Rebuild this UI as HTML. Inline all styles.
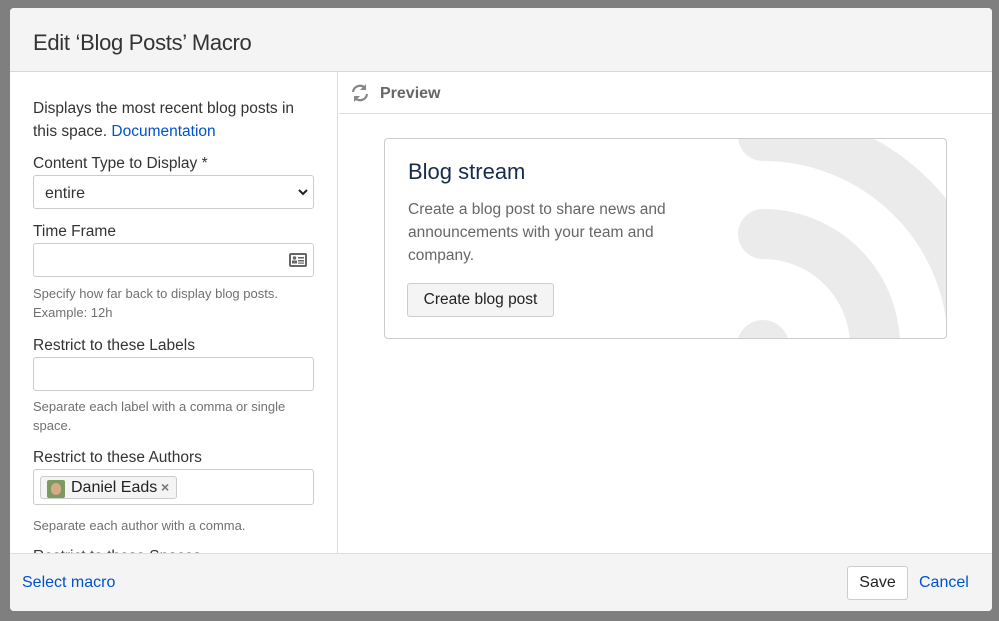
<!DOCTYPE html>
<html><head><style>
*{box-sizing:border-box;margin:0;padding:0}
body{width:999px;height:621px;background:#7f7f7f;font-family:"Liberation Sans",sans-serif;position:relative;overflow:hidden;color:#172b4d}
.dlg{position:absolute;left:10px;top:8px;width:982px;height:603px;background:#fff;border-radius:4px;overflow:hidden}
.hdr{position:absolute;left:0;top:0;width:982px;height:64px;background:#f4f4f4;border-bottom:1px solid #d8d8d8}
.hdr h1{position:absolute;left:23px;top:22px;font-size:22px;font-weight:normal;color:#333;letter-spacing:-0.3px}
.left{position:absolute;left:0;top:64px;width:328px;height:481px;overflow:hidden;border-right:1px solid #ddd}
.a{position:absolute;left:23px;font-size:15.5px;color:#333}
.help{position:absolute;left:23px;font-size:13px;color:#707070;line-height:19px}
.inp{position:absolute;left:23px;width:281px;border:1px solid #ccc;border-radius:3px;background:#fff}
.foot{position:absolute;left:0;top:545px;width:982px;height:58px;background:#f4f4f4;border-top:1px solid #ddd}
.right{position:absolute;left:329px;top:64px;width:653px;height:481px}
</style></head><body>
<div class="dlg">
<div class="hdr"><h1>Edit ‘Blog Posts’ Macro</h1></div>
<div class="left">
 <div class="a" style="top:25px;line-height:23px">Displays the most recent blog posts in<br>this space. <span style="color:#0052cc">Documentation</span></div>
 <div class="a" style="top:83px">Content Type to Display *</div>
 <div class="inp" style="top:103px;height:34px"><span style="position:absolute;left:11px;top:9px;font-size:16px;color:#333">entire</span>
  <svg style="position:absolute;right:4px;top:11px" width="12" height="10"><path d="M2 3l4 4 4-4" stroke="#222" stroke-width="2" fill="none"/></svg></div>
 <div class="a" style="top:151px">Time Frame</div>
 <div class="inp" style="top:171px;height:34px"><svg style="position:absolute;right:6px;top:9px" width="18" height="14"><rect x="0" y="0" width="18" height="14" rx="2" fill="#666"/><rect x="2" y="2" width="14" height="10" fill="#fff"/><circle cx="5.5" cy="5" r="1.7" fill="#666"/><rect x="3" y="7.5" width="5" height="3" fill="#666"/><rect x="9" y="4" width="6" height="1.5" fill="#666"/><rect x="9" y="7" width="6" height="1.5" fill="#666"/><rect x="9" y="9.5" width="6" height="1.2" fill="#666"/></svg></div>
 <div class="help" style="top:212px">Specify how far back to display blog posts.<br>Example: 12h</div>
 <div class="a" style="top:265px">Restrict to these Labels</div>
 <div class="inp" style="top:285px;height:34px"></div>
 <div class="help" style="top:325px">Separate each label with a comma or single<br>space.</div>
 <div class="a" style="top:377px">Restrict to these Authors</div>
 <div class="inp" style="top:397px;height:36px"><div style="position:absolute;left:6px;top:6px;height:23px;width:137px;border:1px solid #ccc;border-radius:3px;background:#f4f4f4">
  <div style="position:absolute;left:6px;top:3px;width:18px;height:18px;border-radius:2px;background:#7a9a60"><div style="position:absolute;left:4px;top:3px;width:10px;height:12px;border-radius:5px;background:#d9a88a"></div></div>
  <span style="position:absolute;left:30px;top:2px;font-size:16px;color:#222">Daniel Eads</span>
  <span style="position:absolute;left:120px;top:2px;font-size:14px;color:#777;font-weight:bold">×</span></div></div>
 <div class="help" style="top:444px">Separate each author with a comma.</div>
 <div class="a" style="top:476px">Restrict to these Spaces</div>
</div>
<div class="right">
 <div style="position:absolute;left:0;top:0;width:653px;height:42px;border-bottom:1px solid #ddd">
  <svg style="position:absolute;left:11px;top:11px" width="20" height="20" viewBox="0 0 20 20"><path d="M3 9A7 7 0 0 1 15 5" stroke="#888" stroke-width="2.2" fill="none"/><path d="M16 1v6h-6z" fill="#888"/><path d="M17 11A7 7 0 0 1 5 15" stroke="#888" stroke-width="2.2" fill="none"/><path d="M4 19v-6h6z" fill="#888"/></svg>
  <span style="position:absolute;left:41px;top:13px;font-size:16px;font-weight:bold;color:#666">Preview</span></div>
 <div style="position:absolute;left:45px;top:66px;width:563px;height:201px;border:1px solid #ccc;border-radius:4px;overflow:hidden">
  <svg style="position:absolute;left:0;top:0" width="563" height="201"><g stroke="#ebebeb" stroke-width="50" fill="none" stroke-linecap="round"><path d="M378 95A112 112 0 0 1 490 207"/><path d="M378 -3A210 210 0 0 1 588 207"/></g><circle cx="378" cy="207" r="26" fill="#ebebeb"/></svg>
  <div style="position:absolute;left:23px;top:20px;font-size:22px;color:#172b4d">Blog stream</div>
  <div style="position:absolute;left:23px;top:59px;font-size:15.5px;color:#666;line-height:23px">Create a blog post to share news and<br>announcements with your team and<br>company.</div>
  <div style="position:absolute;left:22px;top:144px;width:147px;height:34px;border:1px solid #ccc;border-radius:3px;background:#f4f4f4;font-size:15.5px;color:#222;text-align:center;line-height:32px">Create blog post</div>
 </div>
</div>
<div class="foot">
 <span style="position:absolute;left:12px;top:20px;font-size:16px;color:#0052cc">Select macro</span>
 <div style="position:absolute;left:837px;top:12px;width:61px;height:34px;border:1px solid #ccc;border-radius:3px;background:#fff;font-size:16px;color:#222;text-align:center;line-height:32px">Save</div>
 <span style="position:absolute;left:909px;top:20px;font-size:16px;color:#0052cc">Cancel</span>
</div>
</div>
</body></html>
